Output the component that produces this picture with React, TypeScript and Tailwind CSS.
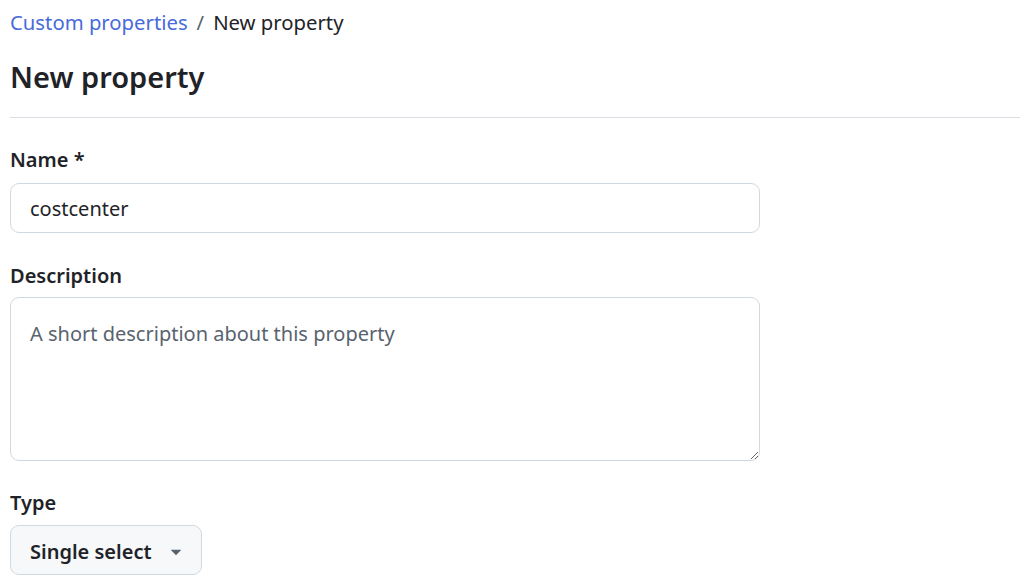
import React from 'react';

const font = { fontFamily: '"Noto Sans", "Open Sans", sans-serif' };

export default function App() {
  return (
    <div className="min-h-screen bg-white px-[10px] pt-[8px] text-[#1f2328]" style={font}>
      {/* Breadcrumb */}
      <nav className="flex items-center text-[20.3px] leading-[28px]">
        <a className="text-[#476bd9]">Custom properties</a>
        <span className="mx-[9px] text-[#59636e]">/</span>
        <span>New property</span>
      </nav>

      <h1 className="mt-[22px] text-[29px] font-semibold leading-[37px]">New property</h1>
      <div className="mt-[22px] -mr-[10px] h-px bg-[#d8dee4]" />

      <form className="w-[750px]">
        <label className="mt-[30px] block text-[20px] font-semibold leading-[24px]">Name *</label>
        <input
          className="mt-[11px] block h-[50px] w-full rounded-[9px] border border-[#d1d9e0] px-[19px] text-[20px] outline-none"
          defaultValue="costcenter"
        />

        <label className="mt-[31px] block text-[20px] font-semibold leading-[24px]">Description</label>
        <textarea
          className="mt-[9px] block h-[164px] w-full resize-y rounded-[9px] border border-[#d1d9e0] px-[19px] pt-[22px] pb-[18px] text-[20px] leading-[28px] outline-none placeholder:text-[#59636e]"
          placeholder="A short description about this property"
        />

        <label className="mt-[30px] block text-[20px] font-semibold leading-[24px]">Type</label>
        <button
          type="button"
          className="mt-[10px] flex h-[50px] items-center rounded-[9px] border border-[#d1d9e0] bg-[#f6f8fa] pl-[19px] pr-[14px] pt-[3px] text-[20px] font-semibold"
        >
          Single select
          <svg width="22" height="22" viewBox="0 0 16 16" className="ml-[13px] -mt-[2px] text-[#59636e]" fill="currentColor">
            <path d="m4.427 7.427 3.396 3.396a.25.25 0 0 0 .354 0l3.396-3.396A.25.25 0 0 0 11.396 7H4.604a.25.25 0 0 0-.177.427Z" />
          </svg>
        </button>
      </form>
    </div>
  );
}
